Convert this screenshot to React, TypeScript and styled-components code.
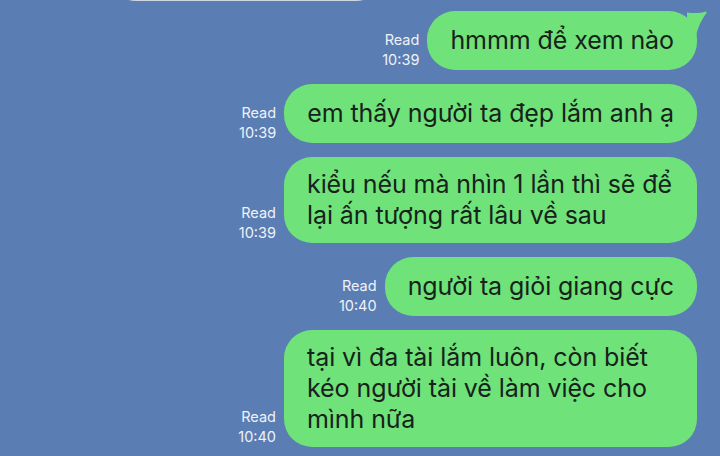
import React from "react";
import styled, { createGlobalStyle } from "styled-components";

const GlobalStyle = createGlobalStyle`
  html, body {
    margin: 0;
    padding: 0;
    background: #5a7db3;
  }
  * {
    box-sizing: border-box;
  }
`;

type Message = {
  time: string;
  lines: string[];
  tail?: boolean;
};

const messages: Message[] = [
  { time: "10:39", lines: ["hmmm để xem nào"], tail: true },
  { time: "10:39", lines: ["em thấy người ta đẹp lắm anh ạ"] },
  {
    time: "10:39",
    lines: ["kiểu nếu mà nhìn 1 lần thì sẽ để", "lại ấn tượng rất lâu về sau"],
  },
  { time: "10:40", lines: ["người ta giỏi giang cực"] },
  {
    time: "10:40",
    lines: ["tại vì đa tài lắm luôn, còn biết", "kéo người tài về làm việc cho", "mình nữa"],
  },
];

const App = () => {
  return (
    <>
      <GlobalStyle />
      <Chat>
        <IncomingRow>
          <Avatar />
          <IncomingBubble />
        </IncomingRow>
        {messages.map((m, i) => (
          <OutgoingRow key={i}>
            <Meta>
              <span>Read</span>
              <span>{m.time}</span>
            </Meta>
            <Bubble $wide={m.lines.length > 1}>
              {m.lines.map((l, j) => (
                <Line key={j}>{l}</Line>
              ))}
              {m.tail && (
                <Tail width="20" height="24" viewBox="0 0 20 24">
                  <path d="M0 1.5 Q12 3 19 0.5 Q20 1 19.5 2 Q13 10 9 24 L0 24 Z" fill="#6fe27a" />
                </Tail>
              )}
            </Bubble>
          </OutgoingRow>
        ))}
      </Chat>
    </>
  );
};

export default App;

const Chat = styled.div`
  width: 720px;
  height: 456px;
  overflow: hidden;
  background: #5a7db3;

  display: flex;
  flex-direction: column;
  align-items: flex-end;
  gap: 14px;

  padding-right: 23px;
  font-family: Inter, "Noto Sans", sans-serif;
`;

const IncomingRow = styled.div`
  align-self: stretch;
  height: 56px;
  margin-top: -55.5px;
  margin-bottom: -3.5px;

  display: flex;
  align-items: flex-end;
  gap: 50px;
  padding-left: 22px;
`;

const Avatar = styled.div`
  width: 36px;
  height: 36px;
  border-radius: 50%;
  background: #2f4a70;
  margin-bottom: 1px;
`;

const IncomingBubble = styled.div`
  width: 276px;
  height: 56px;
  border-radius: 28px;
  background: #cfd7e2;
`;

const OutgoingRow = styled.div`
  display: flex;
  align-items: flex-end;
  gap: 8px;
`;

const Meta = styled.div`
  display: flex;
  flex-direction: column;
  align-items: flex-end;
  padding-bottom: 0;

  color: #eef2f8;
  font-size: 14.5px;
  line-height: 20px;
`;

const Bubble = styled.div<{ $wide: boolean }>`
  position: relative;
  width: ${(p) => (p.$wide ? "413px" : "auto")};
  min-height: 59px;
  padding: 12px 23px 12px 23px;
  border-radius: 28px;
  background: #6fe27a;
  color: #17221a;

  display: flex;
  flex-direction: column;
  justify-content: center;
`;

const Line = styled.div`
  font-size: 25px;
  line-height: 31px;
  letter-spacing: -0.08px;
  white-space: nowrap;
`;

const Tail = styled.svg`
  position: absolute;
  top: 0;
  right: -10px;
`;
